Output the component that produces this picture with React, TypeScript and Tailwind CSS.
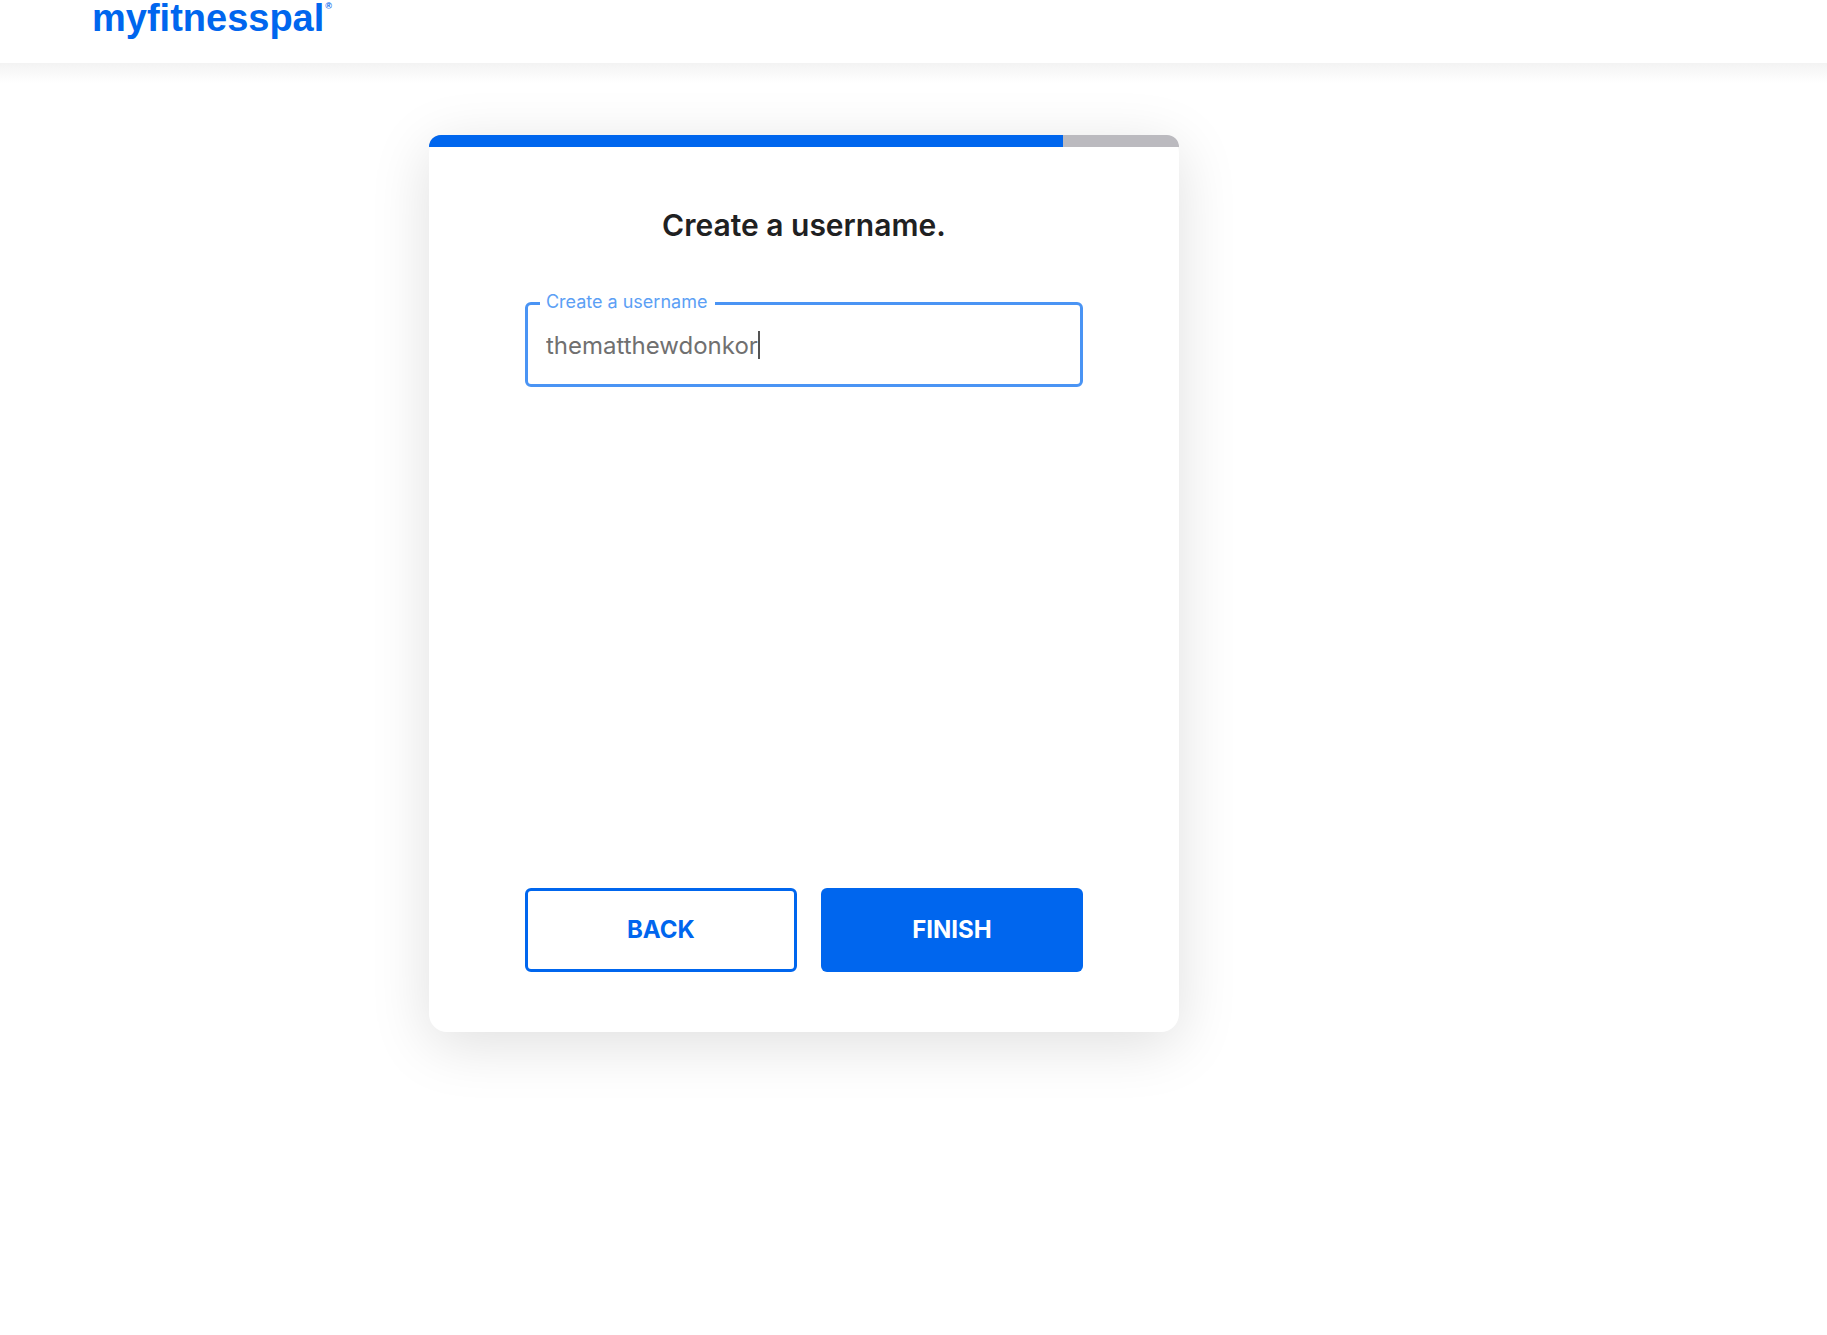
import { useState } from "react";

function Header() {
  return (
    <header className="h-[63px] bg-white pl-[92px]">
      <a href="#" aria-label="myfitnesspal" className="flex items-start gap-px text-[#0066ee]">
        <span className="font-['Liberation_Sans',sans-serif] text-[38px] leading-[37px] font-bold">myfitnesspal</span>
        <span className="font-['Liberation_Sans',sans-serif] text-[9px] leading-3 font-bold">®</span>
      </a>
    </header>
  );
}

function ProgressBar() {
  return (
    <div
      role="progressbar"
      aria-label="Sign-up progress"
      aria-valuenow={85}
      aria-valuemin={0}
      aria-valuemax={100}
      className="h-3 overflow-hidden rounded-t-xl bg-[#bbbabf]"
    >
      <div className="h-full w-[84.6%] bg-[#0066ee]" />
    </div>
  );
}

function UsernameField() {
  const [value, setValue] = useState("thematthewdonkor");
  return (
    <div className="relative mt-[54px] flex h-[85px] items-center rounded-md border-3 border-[#4a94f4] pl-[18px]">
      <label
        htmlFor="username"
        className="absolute -top-[17px] left-3 bg-white pr-2 pl-1.5 text-lg leading-7 font-normal text-[#5c9ff5]"
      >
        Create a username
      </label>
      <input
        id="username"
        type="text"
        value={value}
        onChange={(e) => setValue(e.target.value)}
        className="field-sizing-content max-w-full bg-transparent pt-0.5 text-2xl font-normal text-[#707070] caret-transparent outline-none"
      />
      <span className="h-7 w-0.5 bg-[#545454]" />
    </div>
  );
}

export default function App() {
  return (
    <div className="min-h-screen bg-white font-['Inter',sans-serif]">
      <Header />
      <div className="h-5 bg-linear-to-b from-[#f3f3f3] to-white" />
      <main className="flex justify-center pt-[52px] pr-[12%] pb-16">
        <form
          onSubmit={(e) => e.preventDefault()}
          className="w-full max-w-[750px] rounded-[18px] bg-white shadow-[0_12px_60px_rgba(0,0,0,0.13)]"
        >
          <ProgressBar />
          <div className="flex min-h-[885px] flex-col px-24 pt-14 pb-[60px]">
            <h1 className="text-center text-3xl leading-[45px] font-semibold text-[#1f2122]">
              Create a username.
            </h1>
            <UsernameField />
            <div className="mt-auto flex gap-6">
              <button
                type="button"
                className="h-[84px] w-[272px] rounded-md border-3 border-[#0066ee] bg-white text-2xl font-bold text-[#0066ee]"
              >
                BACK
              </button>
              <button type="submit" className="h-[84px] flex-1 rounded-md bg-[#0066ee] text-2xl font-bold text-white">
                FINISH
              </button>
            </div>
          </div>
        </form>
      </main>
    </div>
  );
}
